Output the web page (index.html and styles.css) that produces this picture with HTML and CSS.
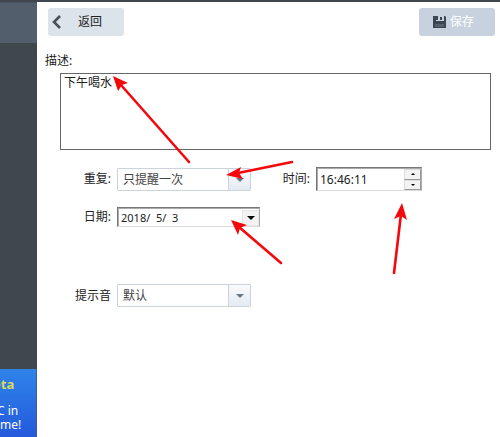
FILE: index.html
```html
<!DOCTYPE html>
<html lang="zh-CN">
<head>
  <meta charset="UTF-8">
  <meta name="viewport" content="width=device-width, initial-scale=1.0">
  <title>提醒</title>
  <link rel="stylesheet" href="styles.css">
</head>
<body>
  <aside class="sidebar">
    <div class="sidebar-item"></div>
    <div class="promo">
      <p class="promo-title">eta</p>
      <p>C in</p>
      <p>ime!</p>
    </div>
  </aside>

  <main class="panel">
    <header class="toolbar">
      <button type="button" class="btn btn-back">
        <svg width="10" height="14" viewBox="0 0 10 14"><path d="M8 1 2 7l6 6" fill="none" stroke="#4a5057" stroke-width="2.6"/></svg>
        返回
      </button>
      <button type="submit" form="reminderForm" class="btn btn-save">
        <svg width="13" height="13" viewBox="0 0 13 13">
          <path d="M0 0h12l1 1v11H0z" fill="#3c4650"/>
          <path d="M3 0h8v5H3z" fill="#c8d2de"/>
          <path d="M7 1h2v3H7zM3 0h2v4H3z" fill="#3c4650"/>
          <path d="M2 8h9v3H2z" fill="#55616c"/>
        </svg>
        保存
      </button>
    </header>

    <form id="reminderForm">
      <label class="desc-label" for="description">描述:</label>
      <textarea id="description" name="description">下午喝水</textarea>

      <div class="row">
        <label for="repeat">重复:</label>
        <div class="combo">
          <select id="repeat" name="repeat"><option>只提醒一次</option></select>
        </div>
        <label for="time">时间:</label>
        <div class="spinner">
          <input type="text" id="time" name="time" value="16:46:11">
          <div class="spinner-buttons">
            <button type="button" aria-label="增加"><svg width="4" height="2"><path d="M2 0 4 2H0z"/></svg></button>
            <button type="button" aria-label="减少"><svg width="4" height="2"><path d="M0 0h4L2 2z"/></svg></button>
          </div>
        </div>
      </div>

      <div class="row row-date">
        <label for="date">日期:</label>
        <div class="datebox">
          <input type="text" id="date" name="date" value="2018/  5/  3">
          <button type="button" aria-label="选择日期"><svg width="8" height="4"><path d="M0 0h8L4 4z"/></svg></button>
        </div>
      </div>

      <div class="row row-sound">
        <label for="sound">提示音</label>
        <div class="combo">
          <select id="sound" name="sound"><option>默认</option></select>
        </div>
      </div>
    </form>
  </main>

  <!-- red pointer arrows over the form -->
  <svg class="arrows" width="500" height="437" viewBox="0 0 500 437">
    <g stroke="#f5080c" stroke-width="2.6" stroke-linecap="round">
      <path d="M189 162 121 85"/>
      <path d="M292 162 238 173"/>
      <path d="M281 263 239 227"/>
      <path d="M394 273 401 214"/>
    </g>
    <g fill="#f5080c">
      <path d="M113 76 128 83 122 85 118 91z"/>
      <path d="M226 175 241 167 239 173 243 179z"/>
      <path d="M231 220 247 225 240 228 238 235z"/>
      <path d="M402 203 407 220 401 216 394 219z"/>
    </g>
  </svg>
</body>
</html>
```

FILE: styles.css
```css
* {
  box-sizing: border-box;
}
body {
  display: flex;
  position: relative;
  min-height: 100vh;
  margin: 0;
  border-top: 2px solid #3f464e;
  background-color: white;
  color: #222;
  font-family: "Noto Sans", "Noto Sans CJK SC", sans-serif;
  font-size: 12px;
  line-height: 16px;
}
input, select, textarea, button {
  margin: 0;
  color: inherit;
  font: inherit;
}

/* sidebar */
.sidebar {
  display: flex;
  flex-direction: column;
  justify-content: space-between;
  flex: none;
  width: 37px;
  overflow: hidden;
  background-color: #40474d;
}
.sidebar-item {
  height: 41px;
  border-top: 1px solid #48515c;
  background-color: #535e6c;
}
.promo {
  height: 68px;
  padding-top: 8px;
  border-right: 1px solid #4c5a75;
  background: linear-gradient(#2f84ea, #2459dc);
  color: white;
}
.promo p {
  margin: 0 0 0 -3px;
  line-height: 14px;
}
.promo .promo-title {
  margin: 0 0 13px -7px;
  color: #d9dc5c;
  font-size: 13px;
  font-weight: bold;
}

/* toolbar */
.panel {
  flex: 1;
  padding: 6px 5px 0 8px;
}
.toolbar {
  display: flex;
  justify-content: space-between;
  padding-left: 3px;
}
.btn {
  display: flex;
  align-items: center;
  width: 76px;
  height: 28px;
  border: none;
  border-radius: 3px;
}
.btn-back {
  gap: 16px;
  padding: 0 4px;
  background-color: #dbe3eb;
}
.btn-save {
  gap: 4px;
  padding: 0 14px;
  background-color: #c8d2de;
  color: white;
}

/* form */
.desc-label {
  display: block;
  margin: 17px 0 4px;
}
textarea {
  display: block;
  width: calc(100% - 19px);
  height: 77px;
  margin-left: 15px;
  padding: 1px 3px;
  border: 1px solid #666;
  border-radius: 0;
  outline: none;
  resize: none;
}
.row {
  display: grid;
  grid-template-columns: 66px 134px 53px 106px;
  column-gap: 6px;
  align-items: center;
  margin-top: 17px;
}
.row label {
  text-align: right;
}
.combo {
  position: relative;
}
.combo select {
  display: block;
  width: 100%;
  height: 23px;
  padding: 1px 5px 0;
  border: 1px solid #ccd3dc;
  border-radius: 1px;
  appearance: none;
  background: linear-gradient(#f9fafc, #e4eaf3) right / 22px 100% no-repeat white;
  color: #444;
}
.combo::before {
  content: "";
  position: absolute;
  top: 1px;
  bottom: 1px;
  right: 22px;
  border-left: 1px solid #ccd3dc;
}
.combo::after {
  content: "";
  position: absolute;
  top: 10px;
  right: 7px;
  border: 4px solid transparent;
  border-top-color: #6d7784;
  border-bottom: none;
}
.spinner, .datebox {
  display: flex;
  border: 1px solid;
  border-color: #777 #aaa #ddd #777;
  box-shadow: inset 1px 1px #aaa;
}
.spinner input, .datebox input {
  flex: 1;
  min-width: 0;
  padding: 1px 3px 0;
  border: none;
  outline: none;
  background: none;
}
.spinner {
  height: 24px;
}
.spinner-buttons {
  display: flex;
  flex-direction: column;
  width: 17px;
  padding-top: 1px;
}
.spinner-buttons button {
  display: flex;
  flex: 1;
  align-items: center;
  justify-content: center;
  padding: 0;
  border: 1px solid;
  border-color: #ddd #999 #999 #ddd;
  background-color: #f3f3f3;
}
.datebox {
  width: 143px;
  height: 20px;
}
.datebox input {
  font-size: 11px;
}
.datebox button {
  display: flex;
  align-items: center;
  justify-content: center;
  width: 17px;
  margin-top: 2px;
  padding: 0;
  border: 1px solid #e6e6e6;
  background-color: #f3f3f3;
}
.row-date {
  margin-top: 16px;
}
.row-sound {
  margin-top: 57px;
}

.arrows {
  position: absolute;
  top: -2px;
  left: 0;
  pointer-events: none;
}
```
